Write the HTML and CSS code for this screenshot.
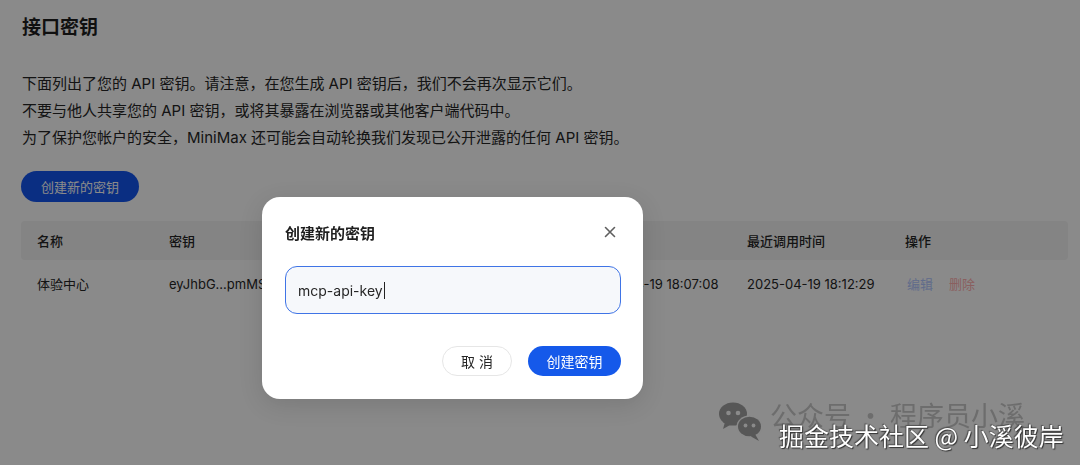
FILE: index.html
```html
<!DOCTYPE html>
<html lang="zh-CN">
<head>
<meta charset="utf-8">
<title>接口密钥</title>
<link rel="stylesheet" href="styles.css">
</head>
<body>
<main class="page">
  <h1 class="title">接口密钥</h1>
  <div class="intro">
    <p>下面列出了您的 API 密钥。请注意，在您生成 API 密钥后，我们不会再次显示它们。</p>
    <p>不要与他人共享您的 API 密钥，或将其暴露在浏览器或其他客户端代码中。</p>
    <p>为了保护您帐户的安全，MiniMax 还可能会自动轮换我们发现已公开泄露的任何 API 密钥。</p>
  </div>
  <button class="btn-primary new-key">创建新的密钥</button>
  <table class="keys">
    <colgroup>
      <col class="c-name"><col class="c-key"><col class="c-created"><col class="c-used"><col class="c-ops">
    </colgroup>
    <thead>
      <tr><th>名称</th><th>密钥</th><th>创建时间</th><th>最近调用时间</th><th>操作</th></tr>
    </thead>
    <tbody>
      <tr>
        <td>体验中心</td>
        <td>eyJhbG...pmMSJ9</td>
        <td>2025-04-19 18:07:08</td>
        <td>2025-04-19 18:12:29</td>
        <td><span class="op edit">编辑</span><span class="op del">删除</span></td>
      </tr>
    </tbody>
  </table>
</main>

<div class="backdrop"></div>

<section class="modal">
  <div class="modal-head">
    <h2 class="modal-title">创建新的密钥</h2>
    <svg class="close" width="16" height="16" viewBox="0 0 16 16"><path d="M3.5 3.5 L12.5 12.5 M12.5 3.5 L3.5 12.5" stroke="#5f5f5f" stroke-width="1.6" stroke-linecap="round" fill="none"/></svg>
  </div>
  <div class="field"><span class="field-text">mcp-api-key</span><span class="caret"></span></div>
  <div class="modal-foot">
    <button class="btn-ghost">取 消</button>
    <button class="btn-primary create">创建密钥</button>
  </div>
</section>

<div class="wm-icon">
  <svg width="48" height="44" viewBox="0 0 48 44">
    <path d="M9 22 L7 29 L15 24.5 Z" fill="#575757"/>
    <ellipse cx="17" cy="14" rx="14" ry="11.5" fill="#575757"/>
    <circle cx="12.5" cy="13" r="2.3" fill="#8a8a8a"/>
    <circle cx="22" cy="13" r="2.3" fill="#8a8a8a"/>
    <ellipse cx="33.5" cy="26.5" rx="13" ry="11" fill="#8a8a8a"/>
    <path d="M39 34 L43 41 L35 36.5 Z" fill="#575757"/>
    <ellipse cx="33.5" cy="26.5" rx="11.5" ry="9.8" fill="#575757"/>
    <circle cx="29.5" cy="25.5" r="1.9" fill="#8a8a8a"/>
    <circle cx="37.5" cy="25.5" r="1.9" fill="#8a8a8a"/>
  </svg>
</div>
<div class="wm-text">公众号 · 程序员小溪</div>
<div class="wm-juejin">掘金技术社区 @ 小溪彼岸</div>
</body>
</html>
```

FILE: styles.css
```css
* { box-sizing: border-box; }
html, body { margin: 0; padding: 0; }
body {
  width: 1080px;
  height: 465px;
  overflow: hidden;
  background: #ffffff;
  font-family: "Inter", "Noto Sans CJK SC", sans-serif;
  color: #222222;
  position: relative;
}
.page {
  padding: 15px 12px 0 21px;
}
.title {
  margin: 0 0 0 1px;
  font-size: 19px;
  line-height: 26px;
  font-weight: 600;
  color: #1f1f1f;
}
.intro {
  margin-top: 29px;
  margin-left: 1px;
  font-size: 15px;
  line-height: 27px;
  color: #262626;
}
.intro p { margin: 0; }
.btn-primary {
  border: none;
  background: #1456f0;
  color: #ffffff;
  font-family: inherit;
  font-size: 14px;
  border-radius: 999px;
  cursor: pointer;
}
.new-key {
  margin-top: 20px;
  height: 31px;
  padding: 0 20px;
  font-size: 13px;
  display: block;
}
.keys {
  margin-top: 19px;
  width: 1047px;
  border-collapse: collapse;
  table-layout: fixed;
  font-size: 13px;
  color: #262626;
}
.c-name { width: 132px; }
.c-key { width: 420px; }
.c-created { width: 158px; }
.c-used { width: 158px; }
.c-ops { width: 179px; }
.keys th {
  background: #f4f4f4;
  text-align: left;
  font-weight: 500;
  height: 39px;
  padding: 0 16px;
}
.keys th:first-child { border-radius: 4px 0 0 4px; }
.keys th:last-child { border-radius: 0 4px 4px 0; }
.keys td {
  height: 47px;
  padding: 0 16px;
  white-space: nowrap;
}
.op { margin-left: 2px; }
.edit { color: #b3c8ff; }
.del { color: #ffb0b0; margin-left: 16px; }

.backdrop {
  position: fixed;
  inset: 0;
  background: rgba(0, 0, 0, 0.46);
}

.modal {
  position: absolute;
  left: 262px;
  top: 197px;
  width: 381px;
  background: #ffffff;
  border-radius: 18px;
  padding: 23px 22px 23px 23px;
  box-shadow: 0 6px 24px rgba(0, 0, 0, 0.12);
}
.modal-head {
  display: flex;
  align-items: center;
  justify-content: space-between;
  height: 24px;
}
.modal-title {
  margin: 0;
  font-size: 15px;
  font-weight: 600;
  color: #1f1f1f;
}
.close { margin-right: 3px; }
.field {
  margin-top: 22px;
  height: 48px;
  border: 1px solid #3f74e6;
  border-radius: 12px;
  background: #f6f8fb;
  display: flex;
  align-items: center;
  padding-left: 12px;
  font-size: 14px;
  color: #262626;
}
.caret {
  display: inline-block;
  width: 1px;
  height: 17px;
  background: #222222;
  margin-left: 1px;
}
.modal-foot {
  margin-top: 32px;
  display: flex;
  justify-content: flex-end;
  gap: 16px;
}
.btn-ghost {
  width: 70px;
  height: 30px;
  border: 1px solid #e6e6e6;
  background: #ffffff;
  border-radius: 999px;
  font-family: inherit;
  font-size: 14px;
  color: #262626;
}
.create {
  width: 93px;
  height: 30px;
  background: #1559ea;
}

.wm-icon {
  position: absolute;
  left: 716px;
  top: 400px;
  line-height: 0;
}
.wm-text {
  position: absolute;
  left: 770px;
  top: 398px;
  font-size: 27px;
  line-height: 34px;
  color: #6d6d6d;
  white-space: nowrap;
  font-family: "Noto Sans CJK SC", sans-serif;
}
.wm-juejin {
  position: absolute;
  left: 779px;
  top: 419px;
  font-size: 25px;
  line-height: 32px;
  color: #ffffff;
  white-space: nowrap;
  font-family: "Noto Sans CJK SC", sans-serif;
  text-shadow: 0 0 1px #333, 1px 1px 1px #333, -1px -1px 1px #555;
}
```
